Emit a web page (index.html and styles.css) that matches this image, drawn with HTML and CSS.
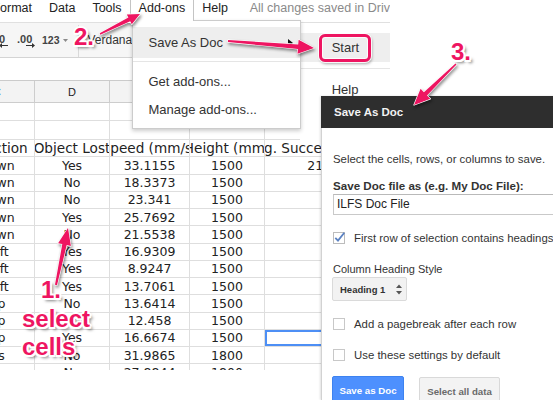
FILE: index.html
```html
<!DOCTYPE html>
<html>
<head>
<meta charset="utf-8">
<title>Save As Doc</title>
<link rel="stylesheet" href="styles.css">
</head>
<body>
<div class="page">
  <div class="sheet">
    <div class="menubar">
      <span class="mi mi-first">Format</span>
      <span class="mi">Data</span>
      <span class="mi">Tools</span>
      <span class="mi mi-active">Add-ons</span>
      <span class="mi">Help</span>
      <span class="mi mi-status">All changes saved in Drive</span>
    </div>
    <div class="toolbar">
      <span class="tb-icon tb-dec"><span>.0</span><svg width="9" height="5" viewBox="0 0 9 5"><path d="M0 2.5 L3 0 V2 H9 V3 H3 V5 Z" fill="#333"/></svg></span>
      <span class="tb-icon tb-inc"><span>.00</span><svg width="9" height="5" viewBox="0 0 9 5"><path d="M9 2.5 L6 0 V2 H0 V3 H6 V5 Z" fill="#333"/></svg></span>
      <span class="tb-fmt">123</span>
      <svg class="tb-caret" width="5" height="3" viewBox="0 0 5 3"><path d="M0 0 H5 L2.5 3 Z" fill="#8a8a8a"/></svg>
      <span class="tb-sep"></span>
      <span class="tb-font">Verdana</span>
    </div>
    <div class="fbar"></div>
    <div class="grid">
      <div class="c h h-sel">C</div><div class="c h">D</div><div class="c h">E</div><div class="c h">F</div><div class="c h">G</div>
      <div class="c"></div><div class="c"></div><div class="c"></div><div class="c"></div><div class="c"></div>
      <div class="c"></div><div class="c"></div><div class="c"></div><div class="c"></div><div class="c"></div>
      <div class="c t">Direction</div><div class="c t">Object Lost</div><div class="c t">Speed (mm/s)</div><div class="c t">Height (mm)</div><div class="c t">Avg. Success Rate</div>
      <div class="c">Down</div><div class="c">Yes</div><div class="c">33.1155</div><div class="c">1500</div><div class="c r">21.667</div>
      <div class="c">Down</div><div class="c">No</div><div class="c">18.3373</div><div class="c">1500</div><div class="c"></div>
      <div class="c">Down</div><div class="c">No</div><div class="c">23.341</div><div class="c">1500</div><div class="c"></div>
      <div class="c">Down</div><div class="c">Yes</div><div class="c">25.7692</div><div class="c">1500</div><div class="c"></div>
      <div class="c">Down</div><div class="c">No</div><div class="c">21.5538</div><div class="c">1500</div><div class="c"></div>
      <div class="c">Left</div><div class="c">Yes</div><div class="c">16.9309</div><div class="c">1500</div><div class="c"></div>
      <div class="c">Left</div><div class="c">Yes</div><div class="c">8.9247</div><div class="c">1500</div><div class="c"></div>
      <div class="c">Left</div><div class="c">Yes</div><div class="c">13.7061</div><div class="c">1500</div><div class="c"></div>
      <div class="c">Up</div><div class="c">No</div><div class="c">13.6414</div><div class="c">1500</div><div class="c"></div>
      <div class="c">Up</div><div class="c">No</div><div class="c">12.458</div><div class="c">1500</div><div class="c"></div>
      <div class="c">Up</div><div class="c">Yes</div><div class="c">16.6674</div><div class="c">1500</div><div class="c sel"></div>
      <div class="c">Us</div><div class="c">No</div><div class="c">31.9865</div><div class="c">1800</div><div class="c"></div>
      <div class="c">Us</div><div class="c">No</div><div class="c">27.8844</div><div class="c">1800</div><div class="c"></div>
      <div class="c"></div><div class="c"></div><div class="c"></div><div class="c"></div><div class="c"></div>
    </div>
  </div>

  <div class="submenu">
    <div class="sm-item sm-hl">Start<span class="start-ring"></span></div>
    <div class="sm-sep"></div>
    <div class="sm-item">Help</div>
  </div>

  <div class="dropdown">
    <div class="dd-item dd-hl"><span>Save As Doc</span><svg width="5" height="8" viewBox="0 0 5 8"><path d="M0 0 L5 4 L0 8 Z" fill="#111"/></svg></div>
    <div class="dd-sep"></div>
    <div class="dd-item">Get add-ons...</div>
    <div class="dd-item">Manage add-ons...</div>
  </div>

  <div class="sidebar">
    <div class="sb-head">Save As Doc</div>
    <div class="sb-body">
      <div class="sb-text">Select the cells, rows, or columns to save.</div>
      <div class="sb-label">Save Doc file as (e.g. My Doc File):</div>
      <div class="sb-input">ILFS Doc File</div>
      <div class="sb-check sb-c1"><svg class="cb" width="12" height="12" viewBox="0 0 12 12"><rect x="0.5" y="0.5" width="11" height="11" fill="#fff" stroke="#bcbcbc"/><path d="M2.3 5.8 L5 8.6 L11.3 0.8" fill="none" stroke="#5b82c2" stroke-width="1.8"/></svg>First row of selection contains headings</div>
      <div class="sb-sub">Column Heading Style</div>
      <div class="sb-select"><span>Heading 1</span><svg width="6" height="11" viewBox="0 0 6 11"><path d="M0 4 L3 0.5 L6 4 Z M0 7 L3 10.5 L6 7 Z" fill="#555"/></svg></div>
      <div class="sb-check sb-c2"><svg class="cb" width="12" height="12" viewBox="0 0 12 12"><rect x="0.5" y="0.5" width="11" height="11" fill="#fff" stroke="#c8c8c8"/></svg>Add a pagebreak after each row</div>
      <div class="sb-check sb-c3"><svg class="cb" width="12" height="12" viewBox="0 0 12 12"><rect x="0.5" y="0.5" width="11" height="11" fill="#fff" stroke="#c8c8c8"/></svg>Use these settings by default</div>
      <div class="sb-buttons"><span class="btn btn-primary">Save as Doc</span><span class="btn btn-plain">Select all data</span></div>
    </div>
  </div>

  <svg class="arrows" width="553" height="400" viewBox="0 0 553 400">
    <polygon points="100.3,34.7 130.2,21.2 131.8,24.3 140,14 126.8,14.5 128.4,17.6 99.7,33.3"/>
    <polygon points="227.9,42 297.9,48.9 297.5,53.7 314,48 298.6,39.7 298.2,44.5 228.1,40"/>
    <polygon points="455.5,63.5 423.9,92.2 420.6,88.8 414,105 430.3,98.8 427,95.4 456.5,64.5"/>
    <polygon points="57,285.2 66.7,245.1 70.9,246 68,228 58.1,243.3 62.3,244.1 55,284.8"/>
  </svg>

  <div class="note note-2">2.</div>
  <div class="note note-3">3.</div>
  <div class="note note-1">1.</div>
  <div class="note note-sel">select<br>cells</div>
</div>
</body>
</html>
```

FILE: styles.css
```css
* { box-sizing: border-box; }

body {
  margin: 0;
  background: #fff;
  font-family: "Liberation Sans", Arial, sans-serif;
}

.page {
  position: relative;
  width: 553px;
  height: 400px;
  overflow: hidden;
  background: #fff;
}

/* ---------- spreadsheet ---------- */
.sheet {
  width: 390px;
  height: 370px;
  overflow: hidden;
}

.menubar {
  display: flex;
  height: 22px;
  font-size: 12.5px;
  line-height: 16px;
  color: #222;
  white-space: nowrap;
}

.mi {
  flex-shrink: 0;
  height: 20px;
  padding: 0 8.5px;
}

.mi-first { margin-left: -16.1px; }

.mi-active {
  position: relative;
  z-index: 7;
  height: 21px;
  padding: 0 7.5px;
  background: #fff;
  border-left: 1px solid #c4c4c4;
  border-right: 1px solid #c4c4c4;
}

.mi-status {
  color: #8a8a8a;
  padding-left: 13.3px;
}

.toolbar {
  display: flex;
  align-items: center;
  height: 36px;
  background: #f6f6f6;
  border-top: 1px solid #e0e0e0;
  border-bottom: 1px solid #d4d4d4;
  color: #444;
  white-space: nowrap;
}

.tb-icon {
  display: flex;
  flex-direction: column;
  align-items: flex-end;
  margin-top: 3px;
  font-weight: bold;
  font-size: 11px;
  line-height: 9px;
}

.tb-icon svg {
  display: block;
  margin-top: -1px;
  margin-right: -3px;
}

.tb-dec { margin-left: -4px; }
.tb-inc { margin-left: 11.8px; }

.tb-fmt {
  margin-left: 9.7px;
  font-weight: bold;
  font-size: 10.5px;
  line-height: 12px;
}

.tb-caret {
  display: block;
  margin-left: 3px;
}

.tb-sep {
  align-self: stretch;
  width: 1px;
  margin: 2px 0 0 10px;
  background: #d9d9d9;
}

.tb-font {
  margin-left: 9px;
  font-size: 12px;
  color: #333;
}

.fbar {
  height: 22px;
  background: #fff;
}

.grid {
  display: grid;
  width: 395px;
  margin-left: -40px;
  grid-template-columns: 75px 75px 80px 75px 90px;
  grid-template-rows: 22px 18px 19px repeat(14, 17.25px);
  border-top: 1px solid #cbcbcb;
}

.c {
  display: flex;
  align-items: center;
  justify-content: center;
  overflow: hidden;
  white-space: nowrap;
  border-right: 1px solid #dedede;
  border-bottom: 1px solid #dedede;
  font-family: "DejaVu Sans", Verdana, sans-serif;
  font-size: 12.5px;
  color: #222;
}

.t { font-size: 13.6px; }

.h {
  background: #f3f3f3;
  border-color: #cdcdcd;
  font-family: "Liberation Sans", Arial, sans-serif;
  font-size: 11px;
  color: #222;
}

.h-sel { color: #3d7fe6; }

.r {
  justify-content: flex-end;
  padding-right: 3px;
}

.sel { box-shadow: inset 0 0 0 2px #4d8ff5; }

/* ---------- menus ---------- */
.dropdown {
  position: absolute;
  z-index: 5;
  left: 131.5px;
  top: 20px;
  width: 169.5px;
  height: 109px;
  padding-top: 6px;
  background: #fff;
  border: 1px solid rgba(0, 0, 0, 0.2);
  box-shadow: 0 2px 4px rgba(0, 0, 0, 0.2);
  font-size: 13px;
  color: #333;
  white-space: nowrap;
}

.dd-item {
  height: 28px;
  line-height: 28px;
  padding-left: 16px;
}

.dd-hl {
  display: flex;
  align-items: center;
  justify-content: space-between;
  height: 31px;
  line-height: 31px;
  padding-right: 7px;
  background: #eee;
}

.dd-sep {
  height: 1px;
  margin: 3px 0 6px;
  background: #e5e5e5;
}

.submenu {
  position: absolute;
  z-index: 4;
  left: 300px;
  top: 23px;
  width: 90px;
  height: 120px;
  padding-top: 10px;
  background: #fff;
  font-size: 13px;
  color: #333;
}

.sm-item {
  position: relative;
  height: 29px;
  line-height: 29px;
  padding-left: 31.7px;
}

.sm-hl { background: #eee; }

.start-ring {
  position: absolute;
  left: 19px;
  top: 0.5px;
  width: 52px;
  height: 28px;
  border: 3px solid #ee1561;
  border-radius: 6px;
  box-shadow: 0 0 0 1px rgba(255, 255, 255, 0.9), 1px 2px 3px rgba(0, 0, 0, 0.35), inset 0 0 0 1px rgba(255, 255, 255, 0.8);
}

.sm-sep {
  height: 1px;
  margin: 6px 0;
  background: #e5e5e5;
}

/* ---------- sidebar ---------- */
.sidebar {
  position: absolute;
  z-index: 6;
  left: 321px;
  top: 96px;
  width: 260px;
  height: 304px;
  background: #fff;
  border-left: 1px solid #d2d2d2;
  box-shadow: -1px 0 2px rgba(0, 0, 0, 0.12);
  white-space: nowrap;
  color: #333;
  font-size: 11.4px;
}

.sb-head {
  height: 32px;
  margin-left: -1px;
  padding-left: 13px;
  line-height: 32px;
  background: #2e2e2e;
  color: #f2f2f2;
  font-weight: bold;
  font-size: 11.5px;
}

.sb-body { padding: 24px 0 0 11px; }

.sb-text { line-height: 14px; }

.sb-label {
  margin-top: 13px;
  line-height: 14px;
  font-weight: bold;
  font-size: 11.6px;
}

.sb-input {
  width: 240px;
  height: 21px;
  margin-top: 1px;
  padding-left: 3px;
  border: 1px solid #c9c9c9;
  border-top-color: #b9b9b9;
  font-size: 12px;
  line-height: 19px;
  color: #222;
}

.sb-check {
  display: flex;
  align-items: center;
  height: 14px;
  line-height: 14px;
}

.sb-c1 { margin-top: 16px; }
.sb-c2 { margin-top: 16px; }
.sb-c3 { margin-top: 17px; }

.cb {
  display: block;
  flex-shrink: 0;
  margin-right: 9px;
  overflow: visible;
}

.sb-sub {
  margin-top: 17px;
  line-height: 14px;
  font-size: 11px;
}

.sb-select {
  display: flex;
  align-items: center;
  justify-content: space-between;
  width: 75px;
  height: 24px;
  margin-top: 1px;
  margin-left: -1px;
  padding: 0 4px 0 7px;
  background: #f2f2f2;
  border: 1px solid #dadada;
  border-radius: 2px;
  font-weight: bold;
  font-size: 9.5px;
  color: #333;
}

.sb-buttons {
  display: flex;
  align-items: flex-start;
  margin-top: 14px;
  margin-left: -1px;
}

.btn {
  display: flex;
  align-items: center;
  justify-content: center;
  height: 28px;
  border-radius: 2px;
  font-weight: bold;
  font-size: 9.7px;
}

.btn-primary {
  width: 72px;
  background: #4d90fe;
  border: 1px solid #3d82f0;
  color: #fff;
}

.btn-plain {
  width: 81px;
  margin-left: 15px;
  margin-top: 1px;
  background: #f3f3f3;
  border: 1px solid #d9d9d9;
  color: #6a6a6a;
}

/* ---------- annotations ---------- */
.arrows {
  position: absolute;
  z-index: 20;
  left: 0;
  top: 0;
  filter: drop-shadow(1.5px 2px 1.5px rgba(0, 0, 0, 0.45));
}

.arrows polygon {
  fill: #ee1561;
  stroke: #fff;
  stroke-width: 1.3;
  stroke-linejoin: round;
  paint-order: stroke;
}

.note {
  position: absolute;
  z-index: 21;
  font-weight: bold;
  font-size: 24px;
  line-height: 24px;
  color: #ee1561;
  white-space: nowrap;
  text-shadow:
    -1.5px -1.5px 0 #fff, 1.5px -1.5px 0 #fff, -1.5px 1.5px 0 #fff, 1.5px 1.5px 0 #fff,
    0 -2px 0 #fff, 0 2px 0 #fff, -2px 0 0 #fff, 2px 0 0 #fff,
    3px 3px 3px rgba(0, 0, 0, 0.5);
}

.note-2 { left: 74px; top: 25px; }
.note-3 { left: 451px; top: 40px; }
.note-1 { left: 41px; top: 278px; }

.note-sel {
  left: 22px;
  top: 305px;
  line-height: 28px;
}
```
